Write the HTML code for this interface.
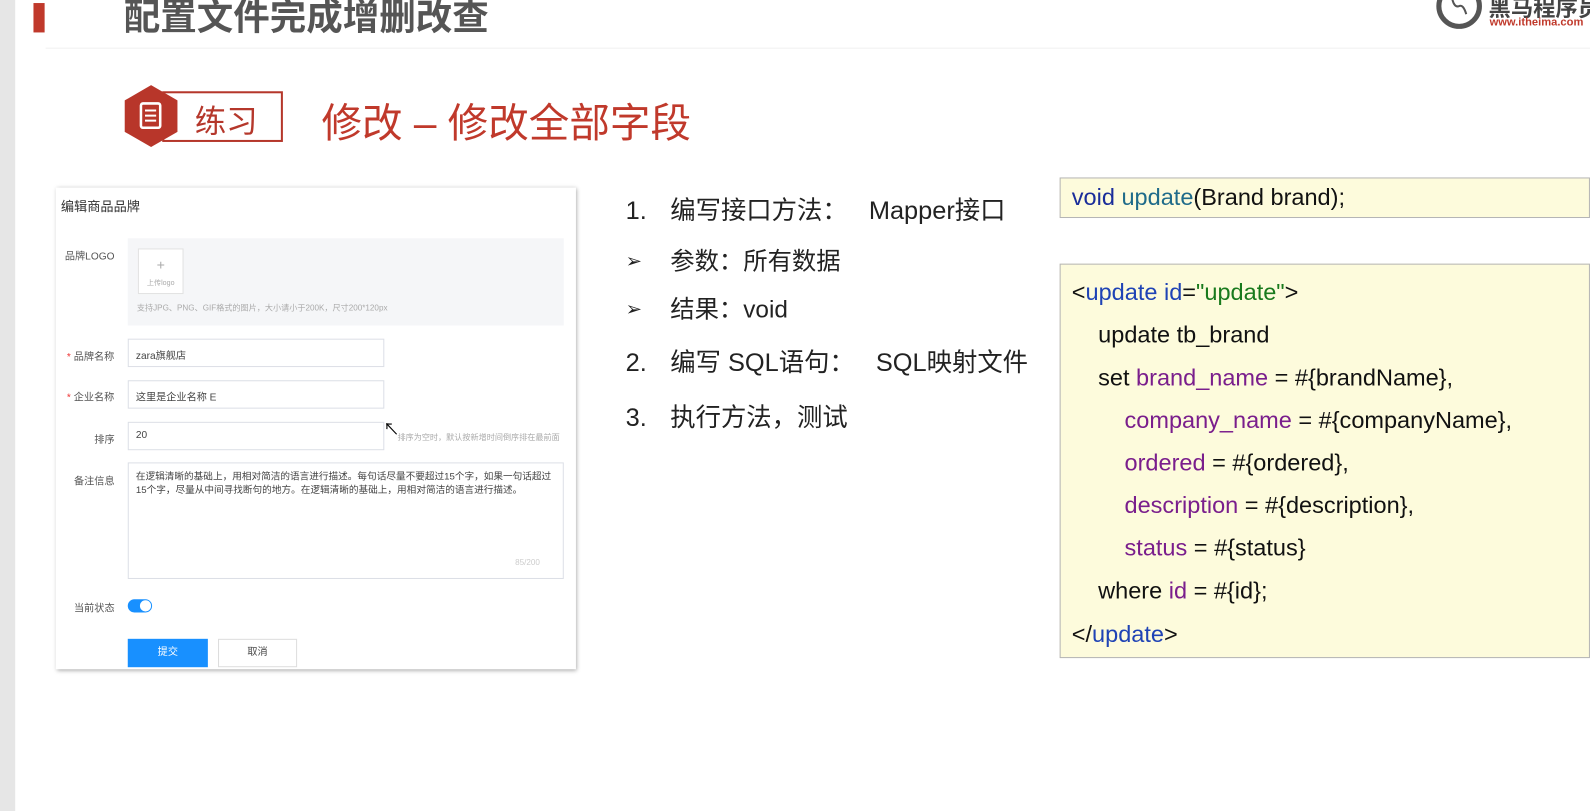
<!DOCTYPE html>
<html><head><meta charset="utf-8"><style>
*{margin:0;padding:0;box-sizing:border-box}
body{width:1590px;height:800px;overflow:hidden;background:#fff;position:relative;font-family:"Liberation Sans","Noto Sans CJK SC",sans-serif}
#w{position:absolute;left:0;top:0;width:1568px;height:789px;transform:scale(1.014);transform-origin:0 0}
.a{position:absolute;white-space:nowrap}
.code{font-family:"Liberation Sans","Noto Sans CJK SC",sans-serif;font-size:23.2px;color:#111}
.kw{color:#1a2d9a}.fn{color:#1f6b8a}.b{color:#1f43b5}.g{color:#197a1d}.p{color:#7a1e8c}
.f{font-size:10px;color:#555}
.inp{position:absolute;border:1px solid #dcdfe6;background:#fff;font-size:10px;color:#444;padding:7px 7px}
.li{font-size:25px;color:#222}
.n{display:inline-block;width:44px}
.bl{display:inline-block;width:44px;font-size:19px;vertical-align:2px}
</style></head><body><div id="w">
<div class="a" style="left:0;top:0;width:15px;height:800px;background:#e6e6e6"></div>
<div class="a" style="left:33px;top:3px;width:11px;height:29px;background:#c0392b"></div>
<div class="a" style="left:122px;top:-12px;font-size:36px;font-weight:bold;color:#555">配置文件完成增删改查</div>
<div class="a" style="left:45px;top:47px;width:1545px;height:1px;background:#f0f0f0"></div>
<svg class="a" style="left:1413px;top:-12px" width="54" height="46"><circle cx="26" cy="18" r="20" fill="none" stroke="#555" stroke-width="5"/><path d="M19 10 q2 10 7 8 q4 -2 7 8" fill="none" stroke="#555" stroke-width="2"/></svg>
<div class="a" style="left:1468px;top:-9px;font-size:22px;font-weight:bold;color:#444">黑马程序员</div>
<div class="a" style="left:1469px;top:16px;font-size:11px;font-weight:bold;color:#c0392b">www.itheima.com</div>

<div class="a" style="left:160px;top:90px;width:119px;height:50px;border:2px solid #b5372b"></div>
<svg class="a" style="left:120px;top:83px" width="58" height="63"><polygon points="29,1 55,16 55,47 29,62 3,47 3,16" fill="#b8362a"/><rect x="19" y="19" width="19" height="24" rx="2" fill="none" stroke="#fff" stroke-width="2.5"/><path d="M23 26h11M23 31h11M23 36h11" stroke="#fff" stroke-width="2"/></svg>
<div class="a" style="left:192px;top:94px;font-size:31px;color:#b5372b">练习</div>
<div class="a" style="left:317px;top:89px;font-size:40px;color:#c0392b">修改 – 修改全部字段</div>

<div class="a" style="left:55px;top:185px;width:513px;height:475px;background:#fff;box-shadow:1px 1px 4px rgba(0,0,0,.35)"></div>
<div class="a" style="left:60px;top:193px;font-size:13px;color:#333">编辑商品品牌</div>
<div class="a f" style="left:64px;top:244px">品牌LOGO</div>
<div class="a" style="left:126px;top:235px;width:430px;height:86px;background:#f5f6f8"></div>
<div class="a" style="left:136px;top:245px;width:45px;height:45px;border:1px solid #e2e2e2;background:#fff;text-align:center;color:#aaa;font-size:14px;line-height:30px">+<div style="font-size:7px;line-height:8px">上传logo</div></div>
<div class="a" style="left:135px;top:298px;font-size:8px;color:#aaa">支持JPG、PNG、GIF格式的图片，大小请小于200K，尺寸200*120px</div>
<div class="a f" style="left:66px;top:343px"><span style="color:#e33">* </span>品牌名称</div>
<div class="inp" style="left:126px;top:334px;width:253px;height:28px">zara旗舰店</div>
<div class="a f" style="left:66px;top:383px"><span style="color:#e33">* </span>企业名称</div>
<div class="inp" style="left:126px;top:375px;width:253px;height:28px">这里是企业名称 E</div>
<div class="a f" style="left:93px;top:425px">排序</div>
<div class="inp" style="left:126px;top:416px;width:253px;height:28px">20</div>
<div class="a" style="left:392px;top:426px;font-size:8px;color:#aaa">排序为空时，默认按新增时间倒序排在最前面</div>
<div class="a" style="left:378px;top:410px;font-size:16px">↖</div>
<div class="a f" style="left:73px;top:466px">备注信息</div>
<div class="inp" style="left:126px;top:456px;width:430px;height:115px;font-size:9.5px;line-height:13px;white-space:normal">在逻辑清晰的基础上，用相对简洁的语言进行描述。每句话尽量不要超过15个字，如果一句话超过15个字，尽量从中间寻找断句的地方。在逻辑清晰的基础上，用相对简洁的语言进行描述。</div>
<div class="a" style="left:508px;top:550px;font-size:8px;color:#ccc">85/200</div>
<div class="a f" style="left:73px;top:591px">当前状态</div>
<div class="a" style="left:126px;top:591px;width:24px;height:13px;border-radius:7px;background:#1890ff"></div>
<div class="a" style="left:138px;top:592px;width:11px;height:11px;border-radius:6px;background:#fff"></div>
<div class="a" style="left:126px;top:630px;width:79px;height:28px;background:#1890ff;color:#fff;font-size:10px;text-align:center;line-height:28px">提交</div>
<div class="a" style="left:215px;top:630px;width:78px;height:28px;border:1px solid #ddd;color:#444;font-size:10px;text-align:center;line-height:26px">取消</div>

<div class="a li" style="left:617px;top:188px"><span class="n">1.</span>编写接口方法：&nbsp;&nbsp;&nbsp;Mapper接口</div>
<div class="a li" style="left:617px;top:238px;font-size:24px"><span class="bl">➢</span>参数：所有数据</div>
<div class="a li" style="left:617px;top:285px;font-size:24px"><span class="bl">➢</span>结果：void</div>
<div class="a li" style="left:617px;top:338px"><span class="n">2.</span>编写 SQL语句：&nbsp;&nbsp;&nbsp;SQL映射文件</div>
<div class="a li" style="left:617px;top:392px"><span class="n">3.</span>执行方法，测试</div>

<div class="a" style="left:1045px;top:175px;width:523px;height:40px;background:#fdfbdc;border:1px solid #b5b5b5"></div>
<div class="a code" style="left:1057px;top:181px"><span class="kw">void</span> <span class="fn">update</span>(Brand brand);</div>
<div class="a" style="left:1045px;top:260px;width:523px;height:389px;background:#fdfbdc;border:1px solid #b5b5b5"></div>
<div class="a code" style="left:1057px;top:275px">&lt;<span class="b">update</span> <span class="b">id</span>=<span class="g">"update"</span>&gt;</div>
<div class="a code" style="left:1083px;top:317px">update tb_brand</div>
<div class="a code" style="left:1083px;top:359px">set <span class="p">brand_name</span> = #{brandName},</div>
<div class="a code" style="left:1109px;top:401px"><span class="p">company_name</span> = #{companyName},</div>
<div class="a code" style="left:1109px;top:443px"><span class="p">ordered</span> = #{ordered},</div>
<div class="a code" style="left:1109px;top:485px"><span class="p">description</span> = #{description},</div>
<div class="a code" style="left:1109px;top:527px"><span class="p">status</span> = #{status}</div>
<div class="a code" style="left:1083px;top:569px">where <span class="p">id</span> = #{id};</div>
<div class="a code" style="left:1057px;top:612px">&lt;/<span class="b">update</span>&gt;</div>
</div></body></html>
